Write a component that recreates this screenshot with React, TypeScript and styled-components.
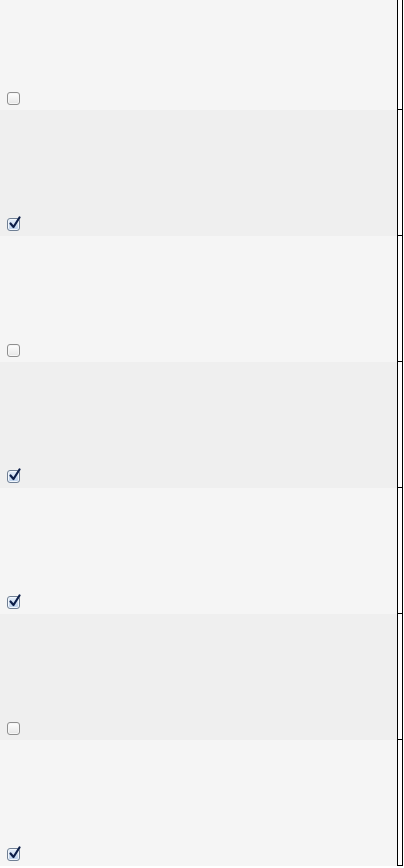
import React from "react";
import styled, { createGlobalStyle } from "styled-components";

const Global = createGlobalStyle`
  html, body { margin: 0; padding: 0; background: #ffffff; }
  body { font-family: "Liberation Sans", Arial, sans-serif; }
`;

const List = styled.div`
  display: flex;
  flex-direction: column;
  width: 403px;
`;

const Row = styled.div<{ $h: number }>`
  display: flex;
  height: ${(p) => p.$h}px;
`;

const Cell = styled.div<{ $alt: boolean }>`
  flex: 1;
  display: flex;
  align-items: flex-end;
  padding: 0 0 5px 7px;
  background: ${(p) => (p.$alt ? "#efefef" : "#f5f5f5")};
`;

const Edge = styled.div`
  width: 4px;
  border: 1px solid #000;
  border-top: none;
  background: #ffffff;
`;

const Box = styled.span<{ $on: boolean }>`
  position: relative;
  display: inline-block;
  width: 13px;
  height: 13px;
  box-sizing: border-box;
  border-radius: 3px;
  border: 1px solid ${(p) => (p.$on ? "#6f7f94" : "#8f8f8f")};
  background: ${(p) =>
    p.$on
      ? "linear-gradient(#e4eefa, #bcd1ec)"
      : "linear-gradient(#ffffff, #e6e6e6)"};
  box-shadow: inset 0 0 0 1px ${(p) => (p.$on ? "#f2f7fd" : "#f6f6f6")};
`;

const Tick = styled.svg`
  position: absolute;
  left: 1px;
  top: -3px;
  width: 12px;
  height: 13px;
`;

function Check({ on }: { on: boolean }) {
  return (
    <Box $on={on} role="checkbox" aria-checked={on}>
      {on && (
        <Tick viewBox="0 0 12 13">
          <path
            d="M1.5 7.5 L4.5 11 L10.5 1.5"
            fill="none"
            stroke="#0d1f4a"
            strokeWidth="2.2"
            strokeLinecap="round"
            strokeLinejoin="round"
          />
        </Tick>
      )}
    </Box>
  );
}

const rows = [false, true, false, true, true, false, true];

export default function App() {
  return (
    <>
      <Global />
      <List>
        {rows.map((on, i) => (
          <Row key={i} $h={i === 0 ? 110 : 126}>
            <Cell $alt={i % 2 === 1}>
              <Check on={on} />
            </Cell>
            <Edge />
          </Row>
        ))}
      </List>
    </>
  );
}
